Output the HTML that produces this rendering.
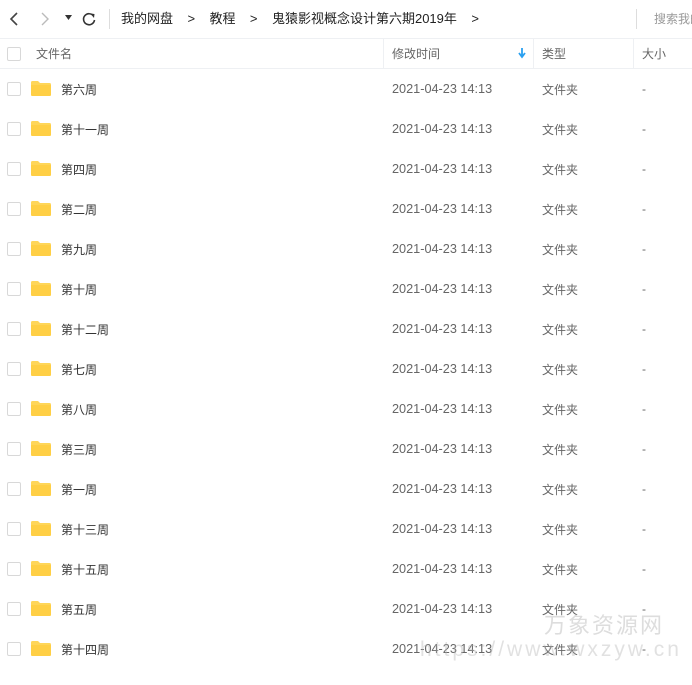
<!DOCTYPE html><html><head><meta charset="utf-8"><style>
body{margin:0;width:692px;height:685px;overflow:hidden;background:#fff;font-family:"Liberation Sans","Noto Sans CJK SC",sans-serif;font-size:12px;line-height:16px;color:#333;position:relative}
.a{position:absolute;white-space:nowrap;line-height:16px;height:16px}
.cb{position:absolute;left:7px;width:12px;height:12px;border:1px solid #d8d8d8;border-radius:2px;background:#fff}
.f{position:absolute;left:31px;width:20px;height:15px}
.g{color:#666}
.d{font-size:12.7px}
.l{position:absolute;background:#eef0f3}
</style></head><body>
<svg class="a" style="left:8px;top:11px" width="14" height="16"><path d="M9 2L3 8l6 6" stroke="#444" stroke-width="1.6" fill="none"/></svg>
<svg class="a" style="left:38px;top:11px" width="14" height="16"><path d="M4 2l6 6-6 6" stroke="#bbb" stroke-width="1.4" fill="none"/></svg>
<svg class="a" style="left:65px;top:15px" width="8" height="6"><path d="M0 0h7L3.5 5z" fill="#333"/></svg>
<svg class="a" style="left:81px;top:11px" width="16" height="16"><path d="M12.5 5A5.5 5.5 0 1 0 13.5 9" stroke="#333" stroke-width="1.6" fill="none"/><path d="M9.5 2.5l4 .5-.5 4z" fill="#333"/></svg>
<div class="l" style="left:109px;top:9px;width:1px;height:20px;background:#ddd"></div>
<div class="a" style="left:121px;top:11px;font-size:13px;color:#222">我的网盘&nbsp;&nbsp;&nbsp;&nbsp;&gt;&nbsp;&nbsp;&nbsp;&nbsp;教程&nbsp;&nbsp;&nbsp;&nbsp;&gt;&nbsp;&nbsp;&nbsp;&nbsp;鬼猿影视概念设计第六期2019年&nbsp;&nbsp;&nbsp;&nbsp;&gt;</div>
<div class="l" style="left:636px;top:9px;width:1px;height:20px;background:#ddd"></div>
<div class="a" style="left:654px;top:11px;color:#999">搜索我的</div>
<div class="l" style="left:0;top:38px;width:692px;height:1px"></div>
<div class="l" style="left:0;top:68px;width:692px;height:1px"></div>
<div class="l" style="left:383px;top:39px;width:1px;height:29px"></div>
<div class="l" style="left:533px;top:39px;width:1px;height:29px"></div>
<div class="l" style="left:633px;top:39px;width:1px;height:29px"></div>
<div class="cb" style="top:47px"></div>
<div class="a g" style="left:36px;top:46px">文件名</div>
<div class="a g" style="left:392px;top:46px">修改时间</div>
<svg class="a" style="left:518px;top:48px" width="8" height="11"><path d="M4 0v8M1 5l3 4 3-4" stroke="#2aa0f0" stroke-width="1.8" fill="none"/></svg>
<div class="a g" style="left:542px;top:46px">类型</div>
<div class="a g" style="left:642px;top:46px">大小</div>
<div id="rows"></div>
<div class="a" style="left:544px;top:614px;font-size:22px;line-height:24px;height:24px;color:rgba(180,180,180,.45);letter-spacing:2px">万象资源网</div>
<div class="a" style="left:420px;top:638px;font-size:21px;line-height:24px;height:24px;color:rgba(180,180,180,.4);letter-spacing:3px">https://www.wxzyw.cn</div>
<script>
var n=["第六周","第十一周","第四周","第二周","第九周","第十周","第十二周","第七周","第八周","第三周","第一周","第十三周","第十五周","第五周","第十四周"],h="";
n.forEach(function(s,i){var c=89+i*40;
h+='<div class="cb" style="top:'+(c-7)+'px"></div><svg class="f" style="top:'+(c-8)+'px" viewBox="0 0 20 15"><path d="M0 1.5Q0 0 1.5 0H7l2 2h9.5Q20 2 20 3.5V13.5Q20 15 18.5 15H1.5Q0 15 0 13.5z" fill="#ffd659"/><path d="M0 4h20v9.5q0 1.5-1.5 1.5H1.5Q0 15 0 13.5z" fill="#ffcf45"/></svg><div class="a" style="left:61px;top:'+(c-7)+'px">'+s+'</div><div class="a g d" style="left:392px;top:'+(c-8)+'px">2021-04-23 14:13</div><div class="a g" style="left:542px;top:'+(c-7)+'px">文件夹</div><div class="a g" style="left:642px;top:'+(c-8)+'px">-</div>';});
document.getElementById("rows").innerHTML=h;
</script>
</body></html>
